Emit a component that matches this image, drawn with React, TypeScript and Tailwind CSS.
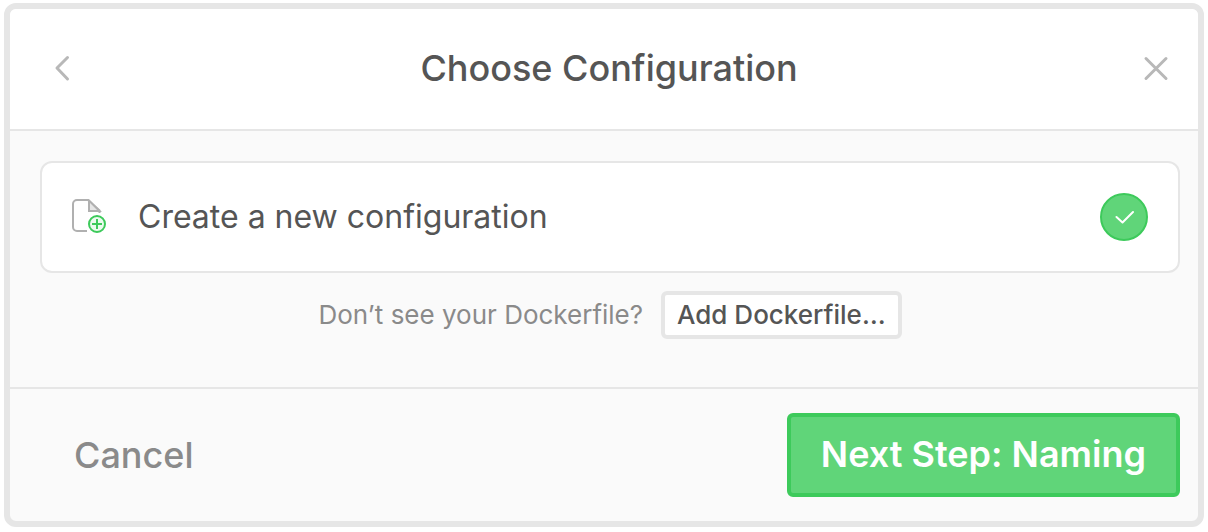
function ChevronLeftIcon() {
  return (
    <svg width="44" height="44" viewBox="0 0 44 44" fill="none" stroke="#b8b8b8" strokeWidth="3" strokeLinecap="round" strokeLinejoin="round" aria-hidden="true">
      <path d="M27.500 11.500 17 22 27.500 33" />
    </svg>
  );
}

function CloseIcon() {
  return (
    <svg width="44" height="44" viewBox="0 0 44 44" fill="none" stroke="#b8b8b8" strokeWidth="3" strokeLinecap="round" aria-hidden="true">
      <path d="M12 12.500 32 32.500M32 12.500 12 32.500" />
    </svg>
  );
}

function NewFileIcon() {
  return (
    <svg width="36" height="36" viewBox="1 0 36 36" fill="none" aria-hidden="true">
      <path d="M16 32H6a4 4 0 0 1-4-4V5a4 4 0 0 1 4-4H17L28.500 11.500V14" stroke="#b0b0b0" strokeWidth="2" />
      <path d="M18 1.500V12H28.500Z" fill="#e6e6e6" stroke="#b0b0b0" strokeWidth="2" />
      <circle cx="26" cy="25" r="10.500" fill="#fff" />
      <circle cx="26" cy="25" r="8" fill="#ebfaee" stroke="#3dca5b" strokeWidth="2" />
      <path d="M26 20v10M21 25h10" stroke="#3dca5b" strokeWidth="2" />
    </svg>
  );
}

function CheckIcon() {
  return (
    <svg width="20" height="14" viewBox="0 0 20 14" fill="none" stroke="#fff" strokeWidth="2" strokeLinecap="round" strokeLinejoin="round" aria-hidden="true">
      <path d="M2.500 7 8.500 12.500 19 2" />
    </svg>
  );
}

export default function App() {
  return (
    <div className="bg-white px-1 pt-[3px] font-['Inter',sans-serif] text-[#555]">
      <section
        role="dialog"
        aria-labelledby="dialog-title"
        className="overflow-hidden rounded-xl border-6 border-[#e6e6e6] bg-[#fafafa]"
      >
        <header className="flex items-center justify-between border-b-2 border-[#e6e6e6] bg-white pt-[37px] pr-5 pb-[39px] pl-[30px]">
          <button type="button" aria-label="Back">
            <ChevronLeftIcon />
          </button>
          <h1 id="dialog-title" className="text-[36px] leading-[44px] font-medium">
            Choose Configuration
          </h1>
          <button type="button" aria-label="Close">
            <CloseIcon />
          </button>
        </header>

        <main className="pt-[30px] pr-[18px] pb-12 pl-[30px]">
          <button
            type="button"
            aria-pressed="true"
            className="flex w-full items-center rounded-xl border-2 border-[#e6e6e6] bg-white p-[30px] text-left"
          >
            <NewFileIcon />
            <span className="ml-[30px] flex-1 text-[32px] leading-[48px]">Create a new configuration</span>
            <span className="flex size-12 items-center justify-center rounded-full border-2 border-[#3dca5b] bg-[#60d579]">
              <CheckIcon />
            </span>
          </button>

          <div className="mt-[18px] flex items-center justify-center gap-[18px] text-[26px] leading-10">
            <p className="text-[#8a8a8a]">Don’t see your Dockerfile?</p>
            <button type="button" className="rounded-md border-4 border-[#e6e6e6] bg-white px-3 font-medium">
              Add Dockerfile…
            </button>
          </div>
        </main>

        <footer className="flex items-center justify-between border-t-2 border-[#e6e6e6] py-6 pr-[18px] pl-[30px] text-[36px] leading-[44px]">
          <button type="button" className="px-[34px] font-medium text-[#8a8a8a]">
            Cancel
          </button>
          <button
            type="button"
            className="rounded-md border-4 border-[#3dca5b] bg-[#60d579] px-[30px] pt-[15px] pb-[17px] font-semibold text-white"
          >
            Next Step: Naming
          </button>
        </footer>
      </section>
    </div>
  );
}
